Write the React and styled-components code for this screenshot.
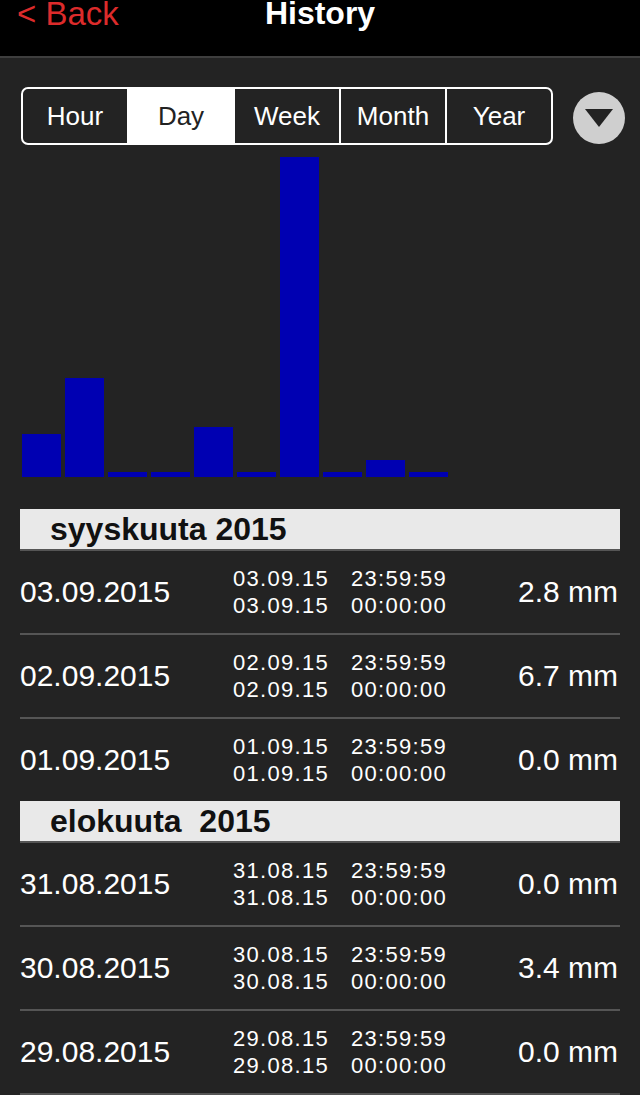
import React from "react";
import styled, { createGlobalStyle } from "styled-components";

const GlobalStyle = createGlobalStyle`
  html, body {
    margin: 0;
    padding: 0;
    background: #232323;
    font-family: "Liberation Sans", Arial, Helvetica, sans-serif;
    overflow: hidden;
  }
`;

const Page = styled.div`
  width: 640px;
  min-height: 1095px;
  background: #232323;
  color: #fff;
`;

const NavBar = styled.div`
  height: 56px;
  background: #000;
  border-bottom: 2px solid #3e3e3e;
  position: relative;
  display: flex;
  align-items: flex-start;
  justify-content: center;
`;

const BackButton = styled.div`
  position: absolute;
  left: 17px;
  top: 0;
  font-size: 33px;
  line-height: 28px;
  color: #dc2b2b;
`;

const Title = styled.div`
  font-size: 32px;
  line-height: 27px;
  font-weight: bold;
  color: #fff;
`;

const ControlRow = styled.div`
  display: flex;
  align-items: flex-start;
  gap: 20px;
  padding: 29px 0 0 21px;
`;

const Segmented = styled.div`
  display: flex;
  width: 532px;
  height: 58px;
  box-sizing: border-box;
  border: 2px solid #fff;
  border-radius: 7px;
  overflow: hidden;
`;

const Segment = styled.div`
  flex: 1;
  display: flex;
  align-items: center;
  justify-content: center;
  font-size: 26px;
  color: ${(p) => (p.$active ? "#222" : "#fff")};
  background: ${(p) => (p.$active ? "#fff" : "transparent")};
  border-left: ${(p) => (p.$first ? "none" : "2px solid #fff")};
`;

const DropButton = styled.div`
  width: 52px;
  height: 52px;
  margin-top: 5px;
  border-radius: 50%;
  background: #cfcfcf;
  display: flex;
  align-items: center;
  justify-content: center;
`;

const Chart = styled.div`
  height: 332px;
  display: flex;
  align-items: flex-end;
  gap: 4px;
  padding-left: 22px;
`;

const Bar = styled.div`
  width: 39px;
  background: #0000b2;
`;

const List = styled.div`
  margin: 32px 20px 0 20px;
`;

const SectionHeader = styled.div`
  height: 40px;
  background: #e9e9e9;
  border-bottom: 2px solid #555;
  padding-left: 30px;
  font-size: 32px;
  font-weight: bold;
  line-height: 40px;
  color: #111;
  white-space: pre;
`;

const Row = styled.div`
  height: 82px;
  display: grid;
  grid-template-columns: 213px auto 1fr;
  align-items: center;
  border-bottom: ${(p) => (p.$last ? "none" : "2px solid #555")};
`;

const BigText = styled.div`
  font-size: 30px;
  color: #fff;
  text-align: ${(p) => (p.$right ? "right" : "left")};
  padding-right: ${(p) => (p.$right ? "2px" : "0")};
`;

const Range = styled.div`
  display: grid;
  grid-template-columns: 118px auto;
  font-size: 22px;
  line-height: 27px;
  letter-spacing: 1.3px;
  color: #fff;
`;

const bars = [43, 99, 5, 5, 50, 5, 320, 5, 17, 5];
const segments = ["Hour", "Day", "Week", "Month", "Year"];

const sections = [
  {
    title: "syyskuuta 2015",
    rows: [
      ["03.09.2015", "03.09.15", "2.8 mm"],
      ["02.09.2015", "02.09.15", "6.7 mm"],
      ["01.09.2015", "01.09.15", "0.0 mm"],
    ],
    lastHasLine: false,
  },
  {
    title: "elokuuta  2015",
    rows: [
      ["31.08.2015", "31.08.15", "0.0 mm"],
      ["30.08.2015", "30.08.15", "3.4 mm"],
      ["29.08.2015", "29.08.15", "0.0 mm"],
    ],
    lastHasLine: true,
  },
];

export default function App() {
  return (
    <Page>
      <GlobalStyle />
      <NavBar>
        <BackButton>&lt; Back</BackButton>
        <Title>History</Title>
      </NavBar>
      <ControlRow>
        <Segmented>
          {segments.map((s, i) => (
            <Segment key={s} $first={i === 0} $active={s === "Day"}>
              {s}
            </Segment>
          ))}
        </Segmented>
        <DropButton>
          <svg width="28" height="20" viewBox="0 0 28 20">
            <polygon points="0,1 28,1 14,19" fill="#232323" />
          </svg>
        </DropButton>
      </ControlRow>
      <Chart>
        {bars.map((h, i) => (
          <Bar key={i} style={{ height: h }} />
        ))}
      </Chart>
      <List>
        {sections.map((sec) => (
          <React.Fragment key={sec.title}>
            <SectionHeader>{sec.title}</SectionHeader>
            {sec.rows.map(([date, short, val], i) => (
              <Row
                key={date}
                $last={i === sec.rows.length - 1 && !sec.lastHasLine}
              >
                <BigText>{date}</BigText>
                <Range>
                  <span>{short}</span>
                  <span>23:59:59</span>
                  <span>{short}</span>
                  <span>00:00:00</span>
                </Range>
                <BigText $right>{val}</BigText>
              </Row>
            ))}
          </React.Fragment>
        ))}
      </List>
    </Page>
  );
}
